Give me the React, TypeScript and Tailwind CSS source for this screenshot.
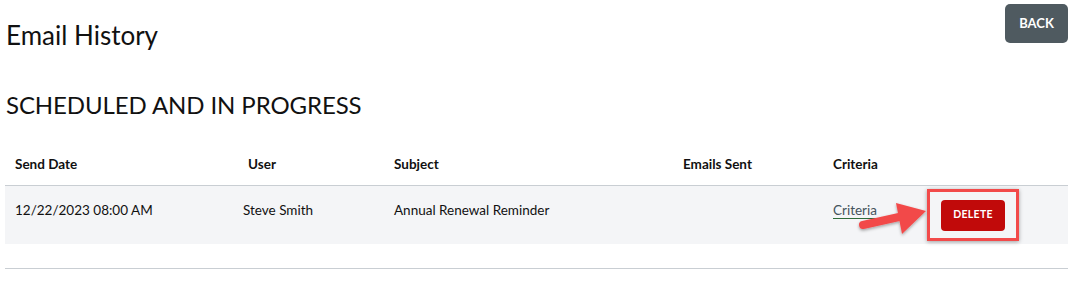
import React from 'react';

const rows = [
    { date: '12/22/2023 08:00 AM', user: 'Steve Smith', subject: 'Annual Renewal Reminder', sent: '' },
];

export default function App() {
    return (
        <div className="w-[1073px] h-[293px] bg-white px-[5px] pt-[4px] font-['Lato','Liberation_Sans',sans-serif] text-[#111]">
            {/* Header */}
            <div className="flex justify-between items-start">
                <h1 className="pl-px pt-[15px] text-[26px] leading-[32px] text-[#111]">Email History</h1>
                <button className="w-[63px] h-[39px] rounded-[5px] bg-[#4f5a60] text-white text-[13px] font-bold">BACK</button>
            </div>

            <h2 className="pl-px mt-[38px] text-[24px] leading-[32px] tracking-[-0.1px]">SCHEDULED AND IN PROGRESS</h2>

            {/* Table */}
            <div className="mt-[33px]">
                <div className="grid grid-cols-[228px_151px_289px_150px_1fr] h-[32px] items-start border-b border-[#c9ced3] text-[13.5px] font-bold pl-[10px]">
                    <div>Send Date</div>
                    <div className="pl-[5px]">User</div>
                    <div>Subject</div>
                    <div>Emails Sent</div>
                    <div>Criteria</div>
                </div>
                {rows.map((r, i) => (
                    <div key={i} className="grid grid-cols-[228px_151px_289px_150px_94px_1fr] h-[58px] items-center bg-[#f4f5f7] text-[13.5px] pl-[10px]">
                        <div className="pb-[9px]">{r.date}</div>
                        <div className="pb-[9px]">{r.user}</div>
                        <div className="pb-[9px]">{r.subject}</div>
                        <div className="pb-[9px]">{r.sent}</div>
                        <div className="pb-[9px]">
                            <a className="text-[#44535c] underline decoration-[#2f6b3a] underline-offset-[3px]">Criteria</a>
                        </div>
                        <div className="relative">
                            <div className="w-[92px] h-[52px] border-[3px] border-[#f24a4a] shadow-[0_1px_4px_rgba(0,0,0,0.35)] flex items-center justify-center">
                                <button className="w-[64px] h-[31px] rounded-[4px] bg-[#c10a0a] text-white text-[10.5px] font-bold tracking-[0.3px]">DELETE</button>
                            </div>
                        </div>
                    </div>
                ))}
                <div className="h-[25px] border-b border-[#c9ced3]" />
            </div>

            {/* Annotation arrow */}
            <svg className="absolute left-[855px] top-[197px]" width="76" height="42" viewBox="0 0 76 42">
                <defs>
                    <filter id="sh" x="-20%" y="-20%" width="140%" height="160%">
                        <feDropShadow dx="0" dy="1.5" stdDeviation="1.5" floodColor="#000" floodOpacity="0.35" />
                    </filter>
                </defs>
                <g filter="url(#sh)">
                    <path d="M8 28 L44 20" stroke="#f24a4a" strokeWidth="8" strokeLinecap="round" />
                    <polygon points="41,6 71,14 47,37" fill="#f24a4a" />
                </g>
            </svg>
        </div>
    );
}
